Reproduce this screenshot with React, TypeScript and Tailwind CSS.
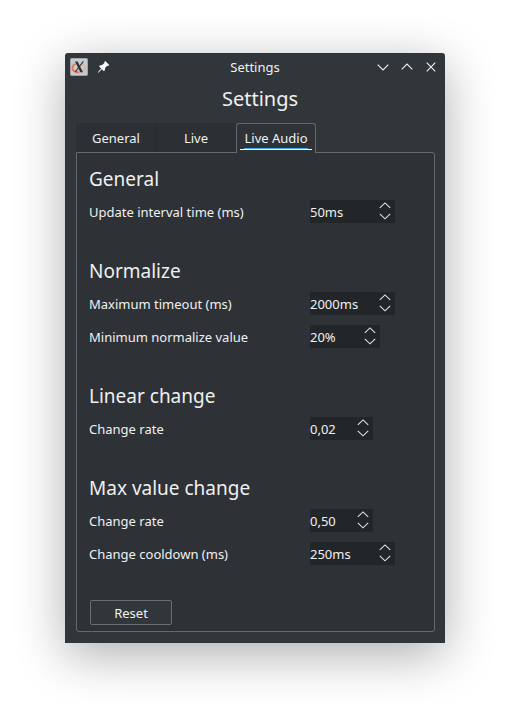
type Item = { label: string; value: string; width: string };
type Group = { title: string; items: Item[] };

const groups: Group[] = [
  { title: "General", items: [{ label: "Update interval time (ms)", value: "50ms", width: "w-[85px]" }] },
  {
    title: "Normalize",
    items: [
      { label: "Maximum timeout (ms)", value: "2000ms", width: "w-[85px]" },
      { label: "Minimum normalize value", value: "20%", width: "w-[70px]" },
    ],
  },
  { title: "Linear change", items: [{ label: "Change rate", value: "0,02", width: "w-[63px]" }] },
  {
    title: "Max value change",
    items: [
      { label: "Change rate", value: "0,50", width: "w-[63px]" },
      { label: "Change cooldown (ms)", value: "250ms", width: "w-[85px]" },
    ],
  },
];

function Chevron({ up = false }: { up?: boolean }) {
  return (
    <svg width="12" height="7" viewBox="0 0 12 7" fill="none" stroke="#dfe1e2" strokeWidth="1.1">
      <path d={up ? "M0.8 5.9 6 0.9 11.2 5.9" : "M0.8 0.8 6 5.8 11.2 0.8"} />
    </svg>
  );
}

function SpinBox({ value, width }: { value: string; width: string }) {
  return (
    <div className={`flex h-[23px] items-center justify-between bg-[#232629] pr-1 ${width}`}>
      <span className="pt-px">{value}</span>
      <div className="flex h-[23px] flex-col justify-between pt-[2px] pb-[3px]">
        <Chevron up />
        <Chevron />
      </div>
    </div>
  );
}

function TitleBar() {
  return (
    <div className="grid h-7 grid-cols-3 items-center">
      <div className="flex items-center pl-[5px]">
        <svg width="18" height="18" viewBox="0 0 18 18">
          <rect x="0.5" y="0.5" width="17" height="17" rx="1" fill="#c6cad0" stroke="#a0a4a8" />
          <path d="M5.6 5.8C1.9 7.2 1.3 11.4 4.4 13.2 6 14.1 7.4 14.4 9 14.3" fill="none" stroke="#e8704a" strokeWidth="1.7" />
          <path d="M9 14.3C13.6 14 16.4 11 15.4 8.4 14.9 7 13.8 6 12.4 5.6" fill="none" stroke="#e2b088" strokeWidth="1.3" />
          <path d="M5 3.6h2.6l5.4 10.6h-2.6z" fill="#2e3235" />
          <path d="M13.4 3.4 5.2 14" stroke="#2e3235" strokeWidth="1.1" />
        </svg>
        <svg className="ml-[9px]" width="13" height="12" viewBox="0 0 13 12" fill="#fcfcfc">
          <path d="M8.3 0 12.2 3.9 11.2 4.9 10.2 4.8 8.1 7.1 7.8 9.3 6.9 10.2 4.9 8.2 1.3 11.7 0.8 11.2 4.2 7.5 2 5.3 2.9 4.4 5.1 4.1 7.4 2 7.3 1Z" />
        </svg>
      </div>
      <span className="text-center">Settings</span>
      <svg className="ml-auto mr-2" width="60" height="12" viewBox="0 0 60 12" fill="none" stroke="#f2f3f3" strokeWidth="1.1">
        <path d="M0.7 3.7 6 8.9 11.3 3.7" />
        <path d="M24.7 8.3 30 3.1 35.3 8.3" />
        <path d="M49.7 1.7 58.3 10.3M58.3 1.7 49.7 10.3" />
      </svg>
    </div>
  );
}

function Tabs() {
  return (
    <div className="ml-[11px] flex h-[30px]">
      <div className="mb-px flex w-20 items-center justify-center rounded-tl-[2px] bg-[#2c3034] pt-px">General</div>
      <div className="mb-px flex w-20 items-center justify-center border-l border-[#272b2e] bg-[#2c3034] pt-px pr-px">Live</div>
      <div className="z-10 flex w-20 flex-col items-center rounded-t-[3px] border border-b-0 border-[#65696c] bg-[#2f3338]">
        <div className="flex h-[24px] items-center pt-[4px] whitespace-nowrap">Live Audio</div>
        <div className="h-px w-16 bg-[#3daee9]" />
        <div className="h-px w-[72px] bg-white" />
      </div>
    </div>
  );
}

export default function App() {
  return (
    <div className="h-[720px] w-[510px] overflow-hidden bg-white pt-[53px] pl-[65px] font-['Noto_Sans',sans-serif] text-[13px] leading-[18px] text-[#eff0f1]">
      <div className="h-[590px] w-[380px] rounded-t-[3px] bg-[#31363b] shadow-[0_12px_50px_rgba(0,0,0,0.32)]">
        <TitleBar />
        <h1 className="h-[42px] pl-[10px] pt-[4px] text-center text-[20px] leading-[28px]">Settings</h1>
        <Tabs />
        <main className="-mt-px ml-[11px] h-[480px] w-[359px] rounded-[3px] rounded-tl-none border border-[#65696c] bg-[#2e3136] px-3 pt-[9px]">
          {groups.map((group) => (
            <section key={group.title} className="mb-[26px]">
              <h2 className="h-[33px] text-[19px] leading-[35px]">{group.title}</h2>
              {group.items.map((item) => (
                <div key={item.label} className="flex h-[33px] items-center">
                  <span className="w-[221px] pt-px">{item.label}</span>
                  <SpinBox value={item.value} width={item.width} />
                </div>
              ))}
            </section>
          ))}
          <button className="mt-[30px] ml-px block h-[25px] w-[82px] rounded-[2px] border border-[#6b6f72] bg-[#31363b] pt-px">Reset</button>
        </main>
      </div>
    </div>
  );
}
